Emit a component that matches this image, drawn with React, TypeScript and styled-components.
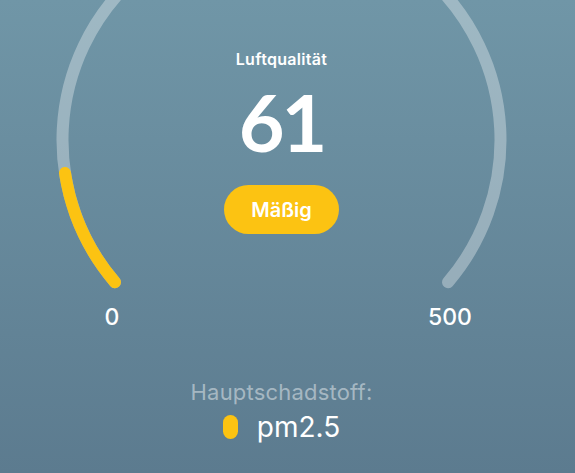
import styled, { createGlobalStyle } from "styled-components";

const GlobalStyle = createGlobalStyle`
  html, body {
    margin: 0;
    padding: 0;
  }
  body {
    font-family: "Inter", "Lato", sans-serif;
  }
`;

const Page = styled.div`
  width: 575px;
  height: 473px;
  overflow: hidden;
  background: linear-gradient(180deg, #7096a7 0%, #5c7b8f 100%);
  color: #fff;
  display: flex;
  flex-direction: column;
`;

const Gauge = styled.div`
  display: grid;
  height: 296px;

  & > * {
    grid-area: 1 / 1;
  }
`;

const Dial = styled.svg`
  display: block;
  width: 575px;
  height: 296px;
`;

const Center = styled.div`
  display: flex;
  flex-direction: column;
  align-items: center;
  padding-top: 50px;
  margin-right: 12px;
`;

const Title = styled.div`
  font-size: 16px;
  line-height: 19px;
  font-weight: 600;
  letter-spacing: 0.3px;
`;

const Value = styled.div`
  margin-top: 13px;
  font-family: "Lato", sans-serif;
  font-size: 79px;
  line-height: 79px;
  font-weight: 700;
  letter-spacing: -3px;
`;

const Badge = styled.div<{ color: string }>`
  margin-top: 24px;
  width: 115px;
  height: 49px;
  border-radius: 25px;
  background: ${(p) => p.color};
  display: flex;
  align-items: center;
  justify-content: center;
  font-size: 20px;
  font-weight: 600;
`;

const Scale = styled.div`
  margin-top: 9px;
  display: flex;
  justify-content: space-between;
  padding: 0 95px 0 82px;
`;

const ScaleLabel = styled.span`
  width: 60px;
  text-align: center;
  font-size: 23px;
  line-height: 24px;
  font-weight: 500;
`;

const Pollutant = styled.div`
  margin-top: 51px;
  display: flex;
  flex-direction: column;
  align-items: center;
  gap: 8px;
  margin-right: 12px;
`;

const PollutantLabel = styled.div`
  font-size: 22px;
  line-height: 24px;
  letter-spacing: 0.2px;
  color: rgba(255, 255, 255, 0.45);
`;

const PollutantRow = styled.div`
  display: flex;
  align-items: center;
  gap: 19px;
  font-size: 28px;
  line-height: 30px;
`;

const Dot = styled.span<{ color: string }>`
  width: 15px;
  height: 24px;
  border-radius: 8px;
  background: ${(p) => p.color};
`;

const CX = 281.5;
const CY = 140;
const R = 219;
const START = 139.5;
const SWEEP = 261;

const point = (deg: number) => {
  const a = (deg * Math.PI) / 180;
  return [CX + R * Math.cos(a), CY + R * Math.sin(a)];
};

const arc = (from: number, to: number) => {
  const [x1, y1] = point(from);
  const [x2, y2] = point(to);
  const large = to - from > 180 ? 1 : 0;
  return `M ${x1} ${y1} A ${R} ${R} 0 ${large} 1 ${x2} ${y2}`;
};

const YELLOW = "#fcc312";

export default function App() {
  const aqi = 61;
  const max = 500;
  const end = START + (SWEEP * aqi) / max;

  return (
    <>
      <GlobalStyle />
      <Page>
        <Gauge>
          <Dial viewBox="0 0 575 296">
            <path
              d={arc(START, START + SWEEP)}
              fill="none"
              stroke="rgba(255,255,255,0.33)"
              strokeWidth={12}
              strokeLinecap="round"
            />
            <path
              d={arc(START, end)}
              fill="none"
              stroke={YELLOW}
              strokeWidth={12}
              strokeLinecap="round"
            />
          </Dial>
          <Center>
            <Title>Luftqualität</Title>
            <Value>{aqi}</Value>
            <Badge color={YELLOW}>Mäßig</Badge>
          </Center>
        </Gauge>
        <Scale>
          <ScaleLabel>0</ScaleLabel>
          <ScaleLabel>{max}</ScaleLabel>
        </Scale>
        <Pollutant>
          <PollutantLabel>Hauptschadstoff:</PollutantLabel>
          <PollutantRow>
            <Dot color={YELLOW} />
            <span>pm2.5</span>
          </PollutantRow>
        </Pollutant>
      </Page>
    </>
  );
}
